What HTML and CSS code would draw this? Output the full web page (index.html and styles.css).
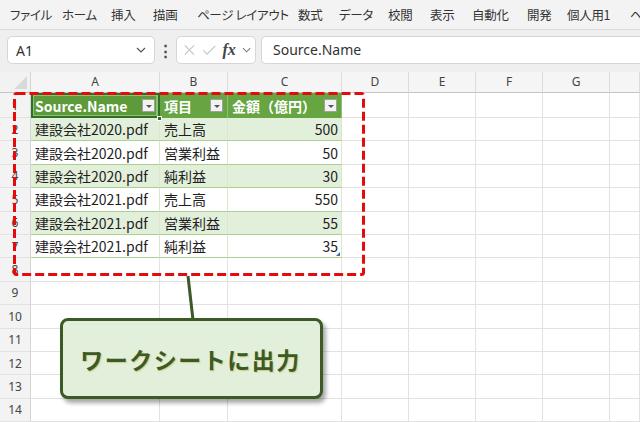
FILE: index.html
```html
<!DOCTYPE html>
<html lang="ja">
<head>
<meta charset="utf-8">
<link rel="stylesheet" href="styles.css">
</head>
<body>
<div class="app">
  <div class="menubar">
    <span class="mi">ファイル</span>
    <span class="mi">ホーム</span>
    <span class="mi">挿入</span>
    <span class="mi">描画</span>
    <span class="mi">ページ レイアウト</span>
    <span class="mi">数式</span>
    <span class="mi">データ</span>
    <span class="mi">校閲</span>
    <span class="mi">表示</span>
    <span class="mi">自動化</span>
    <span class="mi">開発</span>
    <span class="mi">個人用1</span>
    <span class="mi">ヘ</span>
  </div>
  <div class="fbar">
    <div class="namebox">
      <span>A1</span>
      <svg class="chev" width="10" height="6" viewBox="0 0 10 6"><path d="M1 1l4 4 4-4" fill="none" stroke="#555" stroke-width="1.2"/></svg>
    </div>
    <div class="dots">⋮</div>
    <div class="fxbox">
      <svg width="14" height="14" viewBox="0 0 14 14"><path d="M2 2l10 10M12 2L2 12" stroke="#c4c4c4" stroke-width="1.2"/></svg>
      <svg width="16" height="14" viewBox="0 0 16 14"><path d="M1.5 7.5l4 4 9-9" fill="none" stroke="#c4c4c4" stroke-width="1.2"/></svg>
      <span class="fx">fx</span>
      <svg width="10" height="6" viewBox="0 0 10 6"><path d="M1 1l4 4 4-4" fill="none" stroke="#777" stroke-width="1.1"/></svg>
    </div>
    <div class="finput">Source.Name</div>
  </div>
  <div class="sheet">
    <div class="grid">
      <div class="corner"><span class="tri"></span></div>
      <div class="ch">A</div><div class="ch">B</div><div class="ch">C</div><div class="ch">D</div><div class="ch">E</div><div class="ch">F</div><div class="ch">G</div><div class="ch"></div>

      <div class="rh">1</div>
      <div class="th sel"><span>Source.Name</span><span class="dd"></span><span class="handle"></span></div>
      <div class="th"><span>項目</span><span class="dd"></span></div>
      <div class="th"><span>金額（億円）</span><span class="dd"></span></div>
      <div class="c"></div><div class="c"></div><div class="c"></div><div class="c"></div><div class="c"></div>

      <div class="rh">2</div>
      <div class="tg">建設会社2020.pdf</div><div class="tg">売上高</div><div class="tg num">500</div>
      <div class="c"></div><div class="c"></div><div class="c"></div><div class="c"></div><div class="c"></div>

      <div class="rh">3</div>
      <div class="tw">建設会社2020.pdf</div><div class="tw">営業利益</div><div class="tw num">50</div>
      <div class="c"></div><div class="c"></div><div class="c"></div><div class="c"></div><div class="c"></div>

      <div class="rh">4</div>
      <div class="tg">建設会社2020.pdf</div><div class="tg">純利益</div><div class="tg num">30</div>
      <div class="c"></div><div class="c"></div><div class="c"></div><div class="c"></div><div class="c"></div>

      <div class="rh">5</div>
      <div class="tw">建設会社2021.pdf</div><div class="tw">売上高</div><div class="tw num">550</div>
      <div class="c"></div><div class="c"></div><div class="c"></div><div class="c"></div><div class="c"></div>

      <div class="rh">6</div>
      <div class="tg">建設会社2021.pdf</div><div class="tg">営業利益</div><div class="tg num">55</div>
      <div class="c"></div><div class="c"></div><div class="c"></div><div class="c"></div><div class="c"></div>

      <div class="rh">7</div>
      <div class="tw">建設会社2021.pdf</div><div class="tw">純利益</div><div class="tw num last">35<span class="rsz"></span></div>
      <div class="c"></div><div class="c"></div><div class="c"></div><div class="c"></div><div class="c"></div>

      <div class="rh">8</div>
      <div class="c"></div><div class="c"></div><div class="c"></div><div class="c"></div><div class="c"></div><div class="c"></div><div class="c"></div><div class="c"></div>
      <div class="rh">9</div>
      <div class="c"></div><div class="c"></div><div class="c"></div><div class="c"></div><div class="c"></div><div class="c"></div><div class="c"></div><div class="c"></div>
      <div class="rh">10</div>
      <div class="c"></div><div class="c"></div><div class="c"></div><div class="c"></div><div class="c"></div><div class="c"></div><div class="c"></div><div class="c"></div>
      <div class="rh">11</div>
      <div class="c"></div><div class="c"></div><div class="c"></div><div class="c"></div><div class="c"></div><div class="c"></div><div class="c"></div><div class="c"></div>
      <div class="rh">12</div>
      <div class="c"></div><div class="c"></div><div class="c"></div><div class="c"></div><div class="c"></div><div class="c"></div><div class="c"></div><div class="c"></div>
      <div class="rh">13</div>
      <div class="c"></div><div class="c"></div><div class="c"></div><div class="c"></div><div class="c"></div><div class="c"></div><div class="c"></div><div class="c"></div>
      <div class="rh">14</div>
      <div class="c"></div><div class="c"></div><div class="c"></div><div class="c"></div><div class="c"></div><div class="c"></div><div class="c"></div><div class="c"></div>
    </div>

    <svg class="annot" width="640" height="350" viewBox="0 0 640 350">
      <rect x="14.5" y="21.5" width="349" height="181" rx="2" fill="none" stroke="#e30b0b" stroke-width="3" stroke-dasharray="9 4"/>
      <line x1="188" y1="204" x2="193" y2="248" stroke="#3c5a26" stroke-width="3"/>
    </svg>
    <div class="callout">ワークシートに出力</div>
  </div>
</div>
</body>
</html>
```
FILE: styles.css
```css
* { box-sizing: border-box; }
html, body { margin: 0; padding: 0; }
body {
  width: 640px;
  height: 422px;
  overflow: hidden;
  background: #ffffff;
  font-family: "Noto Sans CJK JP", "Noto Sans", sans-serif;
  color: #222;
}
.app { width: 640px; height: 422px; display: flex; flex-direction: column; }

.menubar {
  height: 30px;
  flex: none;
  display: grid;
  grid-template-columns: 52px 49px 42px 44px 101px 41px 49px 42px 42px 55px 40px 63px 40px;
  align-items: center;
  padding-left: 10px;
  background: #f3f3f3;
  border-bottom: 1px solid #dcdcdc;
  font-size: 12.5px;
  letter-spacing: -0.3px;
  font-feature-settings: "palt";
  color: #333;
  white-space: nowrap;
  overflow: hidden;
}

.fbar {
  height: 42px;
  flex: none;
  display: flex;
  align-items: flex-start;
  padding: 6px 0 0 7px;
  background: #efefef;
}
.namebox {
  width: 148px;
  height: 28px;
  background: #fff;
  border: 1px solid #d6d6d6;
  border-radius: 5px;
  display: flex;
  align-items: center;
  justify-content: space-between;
  padding: 0 8px 0 8px;
  font-family: "Noto Sans", sans-serif;
  font-size: 14px;
  color: #333;
}
.dots {
  width: 21px;
  text-align: center;
  font-size: 15px;
  line-height: 28px;
  color: #444;
  font-weight: bold;
}
.fxbox {
  width: 80px;
  height: 28px;
  background: #fff;
  border: 1px solid #d6d6d6;
  border-radius: 5px;
  display: flex;
  align-items: center;
  gap: 6px;
  padding: 0 4px 0 6px;
}
.fx {
  font-family: "Liberation Serif", serif;
  font-style: italic;
  font-weight: bold;
  font-size: 16px;
  color: #444;
  line-height: 1;
}
.finput {
  flex: 1;
  height: 28px;
  margin-left: 5px;
  background: #fff;
  border: 1px solid #d6d6d6;
  border-right: none;
  border-radius: 5px 0 0 5px;
  padding-left: 11px;
  font-family: "Noto Sans", sans-serif;
  font-size: 14px;
  line-height: 26px;
  color: #333;
}

.sheet { position: relative; flex: 1; overflow: hidden; }
.grid {
  display: grid;
  grid-template-columns: 31px 129px 68px 114px 67px 67px 67px 67px 1fr;
  grid-template-rows: 21px 25px repeat(13, 23.4px);
}
.corner {
  background: #f2f2f2;
  border-right: 1px solid #d4d4d4;
  border-bottom: 1px solid #c4c4c4;
  position: relative;
}
.tri {
  position: absolute;
  right: 3px;
  bottom: 3px;
  width: 0; height: 0;
  border-left: 13px solid transparent;
  border-bottom: 13px solid #d9d9d9;
}
.ch {
  background: #f5f5f5;
  border-right: 1px solid #dcdcdc;
  border-bottom: 1px solid #c4c4c4;
  font-family: "Noto Sans", sans-serif;
  font-size: 12px;
  color: #444;
  text-align: center;
  line-height: 20px;
}
.rh {
  background: #f3f3f3;
  border-right: 1px solid #d4d4d4;
  border-bottom: 1px solid #e2e2e2;
  font-family: "Noto Sans", sans-serif;
  font-size: 12px;
  color: #444;
  display: flex;
  align-items: center;
  justify-content: center;
}
.c {
  border-right: 1px solid #e2e2e2;
  border-bottom: 1px solid #e2e2e2;
}
.th {
  position: relative;
  background: #67a543;
  border-right: 1px solid #8fc06f;
  color: #fff;
  font-weight: bold;
  font-size: 14px;
  display: flex;
  align-items: center;
  justify-content: space-between;
  padding: 0 4px 0 4px;
  white-space: nowrap;
}
.th.sel {
  background: #5c9a3a;
  outline: 2px solid #2f6e2c;
  outline-offset: -2px;
  box-shadow: inset 0 0 0 3px #8ec36c;
}
.dd {
  width: 13px;
  height: 13px;
  background: #f2f2f2;
  border: 1px solid #a0a0a0;
  position: relative;
  flex: none;
}
.dd::after {
  content: "";
  position: absolute;
  left: 3px;
  top: 5px;
  border-left: 3px solid transparent;
  border-right: 3px solid transparent;
  border-top: 3px solid #555;
}
.handle {
  position: absolute;
  right: -3px;
  bottom: -3px;
  width: 5px;
  height: 5px;
  background: #2f6e2c;
  border: 1px solid #fff;
  z-index: 2;
}
.tg, .tw {
  border-right: 1px solid #d8e8cd;
  border-bottom: 1px solid #a9d08e;
  font-size: 14px;
  color: #1e1e1e;
  display: flex;
  align-items: center;
  padding: 0 4px;
  white-space: nowrap;
}
.tg { background: #e2efda; }
.tw { background: #ffffff; }
.num { justify-content: flex-end; padding-right: 3px; }
.last { position: relative; }
.rsz {
  position: absolute;
  right: 1px;
  bottom: 1px;
  width: 0; height: 0;
  border-left: 4px solid transparent;
  border-bottom: 4px solid #3a6fb0;
}

.annot { position: absolute; left: 0; top: 0; pointer-events: none; }
.callout {
  position: absolute;
  left: 60px;
  top: 246px;
  width: 263px;
  height: 81px;
  background: #e2efda;
  border: 3px solid #3c5a26;
  border-radius: 8px;
  box-shadow: 3px 4px 4px rgba(0, 0, 0, 0.35);
  display: flex;
  align-items: center;
  justify-content: center;
  font-size: 23px;
  font-weight: bold;
  letter-spacing: 1.5px;
  color: #3c5a26;
  text-shadow: 1px 1px 1px rgba(200, 170, 60, 0.5);
  padding-right: 2px;
}
```
